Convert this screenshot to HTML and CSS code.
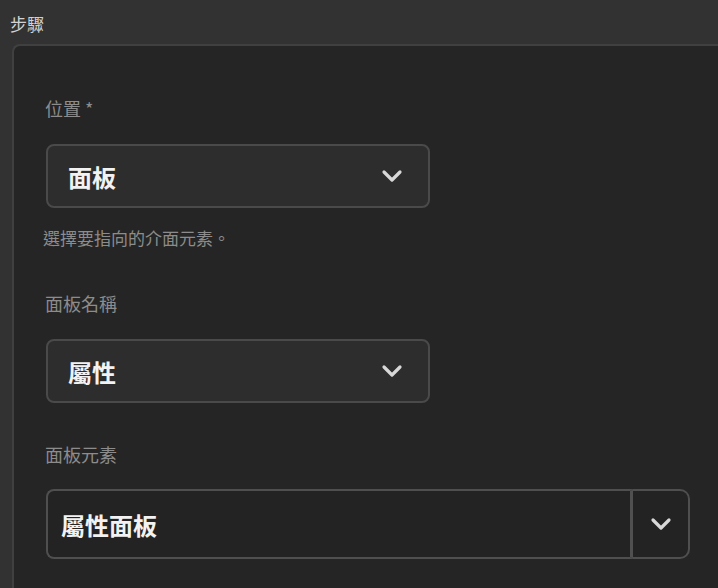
FILE: index.html
```html
<!DOCTYPE html>
<html lang="zh-Hant">
<head>
<meta charset="utf-8">
<link rel="stylesheet" href="styles.css">
</head>
<body>
<div class="header">步驟</div>
<div class="panel">
  <div class="field">
    <div class="label">位置 *</div>
    <div class="select">
      <span class="value">面板</span>
      <svg class="chev" width="22" height="14" viewBox="0 0 22 14"><path d="M3 3 L11 11 L19 3" fill="none" stroke="#d8d8d8" stroke-width="3.2" stroke-linecap="round" stroke-linejoin="round"/></svg>
    </div>
    <div class="help">選擇要指向的介面元素。</div>
  </div>
  <div class="field">
    <div class="label">面板名稱</div>
    <div class="select">
      <span class="value">屬性</span>
      <svg class="chev" width="22" height="14" viewBox="0 0 22 14"><path d="M3 3 L11 11 L19 3" fill="none" stroke="#d8d8d8" stroke-width="3.2" stroke-linecap="round" stroke-linejoin="round"/></svg>
    </div>
  </div>
  <div class="field">
    <div class="label">面板元素</div>
    <div class="combo">
      <div class="input">屬性面板</div>
      <div class="btn">
        <svg class="chev" width="22" height="14" viewBox="0 0 22 14"><path d="M3 3 L11 11 L19 3" fill="none" stroke="#d8d8d8" stroke-width="3.2" stroke-linecap="round" stroke-linejoin="round"/></svg>
      </div>
    </div>
  </div>
</div>
</body>
</html>
```
FILE: styles.css
```css
html, body {
  margin: 0;
  padding: 0;
  background: #323232;
  height: 100%;
  overflow: hidden;
  font-family: "Noto Sans CJK TC", "Noto Sans", sans-serif;
}
.header {
  height: 44px;
  padding-left: 10px;
  box-sizing: border-box;
  padding-top: 12px;
  font-size: 17px;
  line-height: 24px;
  color: #d2d2d2;
}
.panel {
  margin-left: 12px;
  border: 2px solid #404040;
  border-right: none;
  border-bottom: none;
  border-top-left-radius: 8px;
  background: #252525;
  height: 600px;
  padding: 50px 0 0 32px;
  box-sizing: border-box;
  overflow: hidden;
}
.label {
  font-size: 18px;
  line-height: 24px;
  color: #8c8c8c;
  margin-left: -1px;
}
.select {
  margin-top: 24px;
  width: 384px;
  height: 64px;
  box-sizing: border-box;
  border: 2px solid #4a4a4a;
  border-radius: 8px;
  background: #2d2d2d;
  display: flex;
  align-items: center;
  justify-content: space-between;
  padding: 0 25px 0 20px;
}
.value {
  font-size: 24px;
  font-weight: 700;
  color: #f2f2f2;
}
.help {
  margin-top: 18px;
  font-size: 17px;
  line-height: 24px;
  color: #8c8c8c;
  margin-left: -3px;
}
.field + .field { margin-top: 41px; }
.field:nth-child(3) { margin-top: 39px; }
.combo {
  margin-top: 23px;
  width: 644px;
  height: 70px;
  display: flex;
  box-sizing: border-box;
}
.input {
  flex: 1;
  border: 2px solid #4f4f4f;
  border-right: 3px solid #505050;
  border-radius: 8px 0 0 8px;
  background: #232323;
  display: flex;
  align-items: center;
  padding-left: 13px;
  font-size: 24px;
  font-weight: 700;
  color: #f2f2f2;
}
.btn {
  width: 55px;
  border: 2px solid #4f4f4f;
  border-left: none;
  border-radius: 0 10px 10px 0;
  background: #232323;
  display: flex;
  align-items: center;
  justify-content: center;
}
```
